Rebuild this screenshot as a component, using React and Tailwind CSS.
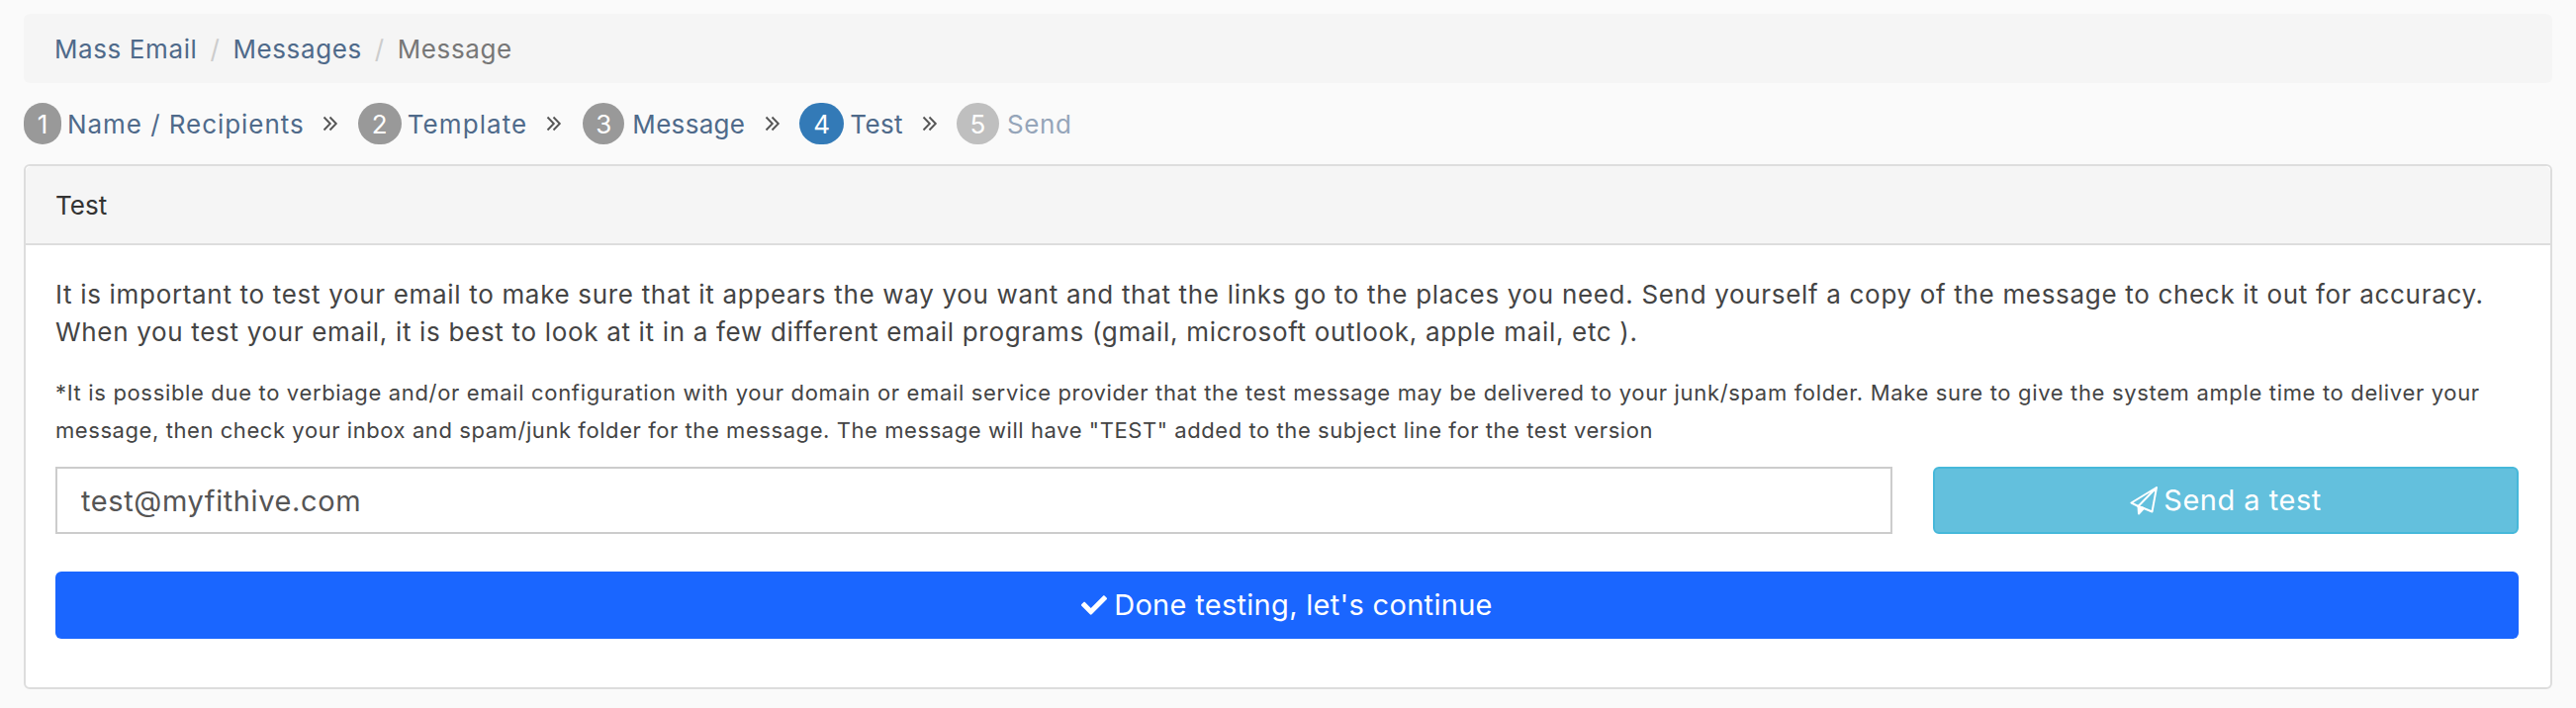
import React from "react";
import { FaCheck } from "react-icons/fa";

const Sep = ({ className }) => (
  <svg viewBox="0 0 16 16" className={`h-[16px] w-[16px] shrink-0 ${className}`} fill="none" stroke="#555555" strokeWidth="1.9">
    <path d="M1.5 1.5 L7.8 8 L1.5 14.5" />
    <path d="M7.5 1.5 L13.8 8 L7.5 14.5" />
  </svg>
);

const Plane = () => (
  <svg viewBox="0 0 28 29" className="h-[29px] w-[28px] shrink-0" fill="none" stroke="white" strokeWidth="2" strokeLinejoin="round">
    <path d="M27 1 L1.5 16.5 L8.5 20 L27 1 L22.5 25.5 L14 22 L8.5 20" />
    <path d="M8.5 20 L9 27.5 L14 22 Z" fill="white" />
  </svg>
);

const steps = [
  { n: "1", label: "Name / Recipients", w: "w-[38px]", bg: "bg-[#999999]", text: "text-[#4f6a8a] tracking-[0.95px]", ml: "ml-[6px]", sl: "ml-[18px] mr-[20px]" },
  { n: "2", label: "Template", w: "w-[44px]", bg: "bg-[#999999]", text: "text-[#4f6a8a] tracking-[1.1px]", ml: "ml-[6px]", sl: "ml-[19px] mr-[21px]" },
  { n: "3", label: "Message", w: "w-[42px]", bg: "bg-[#999999]", text: "text-[#4f6a8a] tracking-[0.3px]", ml: "ml-[8px]", sl: "ml-[20px] mr-[19px]" },
  { n: "4", label: "Test", w: "w-[45px]", bg: "bg-[#337ab7]", text: "text-[#4f6a8a] tracking-[0.4px]", ml: "ml-[6px]", sl: "ml-[19px] mr-[19px]" },
  { n: "5", label: "Send", w: "w-[43px]", bg: "bg-[#bfbfbf]", text: "text-[#95a5b9] tracking-[0.6px]", ml: "ml-[8px]", sl: "" },
];

export default function App() {
  return (
    <div className="min-h-[716px] bg-[#fafafa] px-6 pt-[14px] font-['Inter',sans-serif] text-[#4a4a4a]">
      <nav className="flex h-[70px] items-center rounded-md bg-[#f5f5f5] px-[31px] text-[26px] tracking-[0.6px]">
        <span className="text-[#4f6a8a]">Mass Email</span>
        <span className="mx-[13px] text-[#cccccc]">/</span>
        <span className="text-[#4f6a8a]">Messages</span>
        <span className="mx-[13px] text-[#cccccc]">/</span>
        <span className="text-[#777777]">Message</span>
      </nav>

      <div className="mt-[20px] flex h-[42px] items-center text-[26px]">
        {steps.map((s) => (
          <React.Fragment key={s.n}>
            <span className={`flex h-[42px] ${s.w} items-center justify-center rounded-full ${s.bg} text-white`}>{s.n}</span>
            <span className={`${s.ml} ${s.text}`}>{s.label}</span>
            {s.sl && <Sep className={s.sl} />}
          </React.Fragment>
        ))}
      </div>

      <section className="mt-[20px] h-[531px] rounded-md border-2 border-[#dddddd] bg-white">
        <header className="flex h-[80px] items-center rounded-t-md border-b-2 border-[#dddddd] bg-[#f5f5f5] px-[30px] text-[26px] text-[#333333]">
          Test
        </header>
        <div className="px-[30px] pt-[31px]">
          <p className="text-[26px] leading-[38px] tracking-[0.68px] text-[#444444]">
            <span className="block whitespace-nowrap">It is important to test your email to make sure that it appears the way you want and that the links go to the places you need. Send yourself a copy of the message to check it out for accuracy.</span>
            <span className="block whitespace-nowrap">When you test your email, it is best to look at it in a few different email programs (gmail, microsoft outlook, apple mail, etc ).</span>
          </p>
          <p className="mt-[23px] text-[22px] leading-[38px] tracking-[0.66px] text-[#444444]">
            <span className="block whitespace-nowrap">*It is possible due to verbiage and/or email configuration with your domain or email service provider that the test message may be delivered to your junk/spam folder. Make sure to give the system ample time to deliver your</span>
            <span className="block whitespace-nowrap tracking-[0.57px]">message, then check your inbox and spam/junk folder for the message. The message will have "TEST" added to the subject line for the test version</span>
          </p>
          <div className="mt-[18px] flex gap-[41px]">
            <input
              readOnly
              value="test@myfithive.com"
              className="h-[68px] w-[1857px] border-2 border-[#cccccc] bg-white px-[24px] text-[29px] tracking-[0.6px] text-[#555555] outline-none"
            />
            <button className="flex h-[68px] w-[592px] items-center justify-center gap-[6px] rounded-md border-2 border-[#46b8da] bg-[#63c0dd] text-[29px] tracking-[0.5px] text-white">
              <Plane />
              Send a test
            </button>
          </div>
          <button className="mt-[38px] flex h-[68px] w-[2490px] items-center justify-center gap-[7px] rounded-md bg-[#1a66ff] text-[29px] tracking-[0.3px] text-white">
            <FaCheck className="h-[26px] w-[26px]" />
            Done testing, let's continue
          </button>
        </div>
      </section>
    </div>
  );
}
